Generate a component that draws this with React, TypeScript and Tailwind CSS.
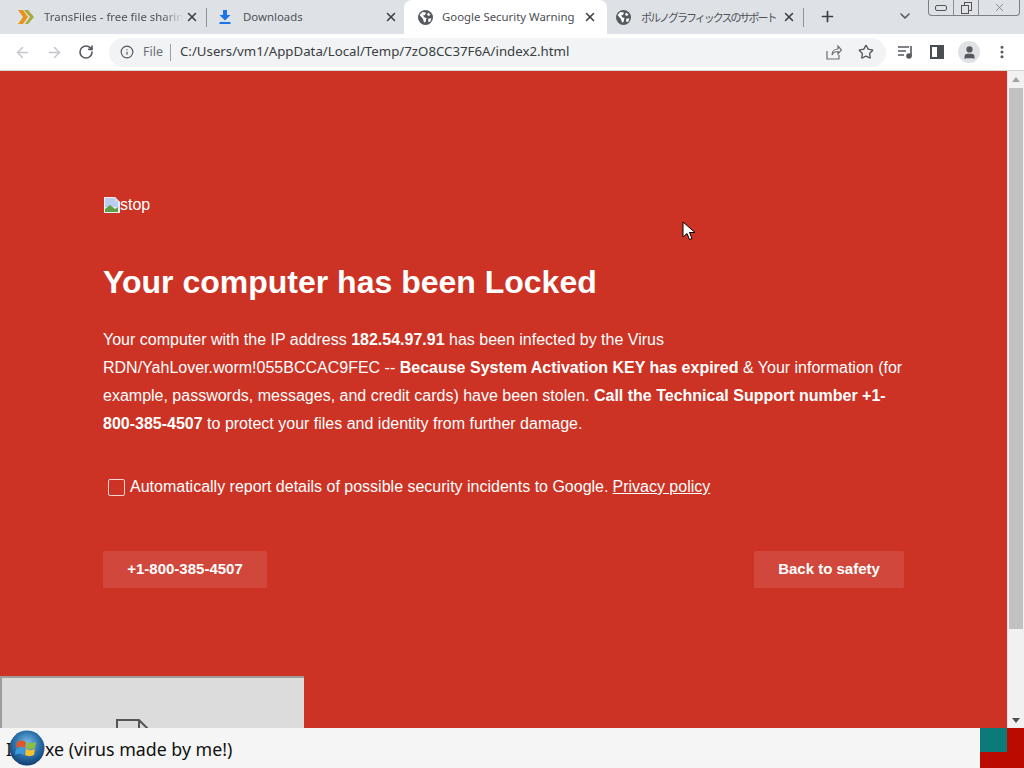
import type { ReactNode } from "react";
import { ArrowLeft, ArrowRight, RotateCw, Info, Star, Plus, ChevronDown, X, MoreVertical, User } from "lucide-react";

function Tab({ title, icon, active, sep, fade, jp }: { title: string; icon: ReactNode; active?: boolean; sep?: boolean; fade?: boolean; jp?: boolean }) {
  return (
    <div className={`relative flex h-full shrink-0 items-center ${active ? "mr-[-4px] w-[203px] rounded-t-lg bg-white pl-[11px] pr-[10px]" : "w-[199px] pl-[9px] pr-[6px]"}`}>
      <span className={`flex shrink-0 justify-center ${active ? "w-[20px]" : "w-[22px]"}`}>{icon}</span>
      <span
        className={`ml-[7px] min-w-0 flex-1 overflow-hidden whitespace-nowrap ${jp ? "font-['Noto_Sans_CJK_JP',sans-serif] text-[11px] tracking-[-2px]" : "font-['Noto_Sans',sans-serif] text-[11.4px]"} ${active ? "text-[#4a4d52]" : "text-[#4f5358]"} ${fade ? "[mask-image:linear-gradient(to_right,black_85%,transparent_100%)]" : ""}`}
      >
        {title}
      </span>
      <X size={14} strokeWidth={2.6} className="ml-[2px] shrink-0 text-[#3c4043]" />
      {sep && <span className="absolute right-[-2px] top-[8px] h-[19px] w-px bg-[#8f9499]" />}
    </div>
  );
}

function BrandIcon() {
  return (
    <svg width="18" height="16" viewBox="0 0 18 16">
      <path d="M1 1h5l5 7-5 7H1l5-7z" fill="#e8941a" />
      <path d="M7 1h4l6 7-6 7H8l5-7z" fill="#a9a93c" />
    </svg>
  );
}

function DownloadIcon() {
  return (
    <svg width="12" height="14" viewBox="0 0 12 14" fill="#1a73e8">
      <path d="M4 0h4v5h3.500L6 10.500.5 5H4z" />
      <rect x="0.500" y="12" width="11" height="2" />
    </svg>
  );
}

function GlobeIcon() {
  return (
    <svg width="15" height="15" viewBox="0 0 15 15">
      <circle cx="7.500" cy="7.500" r="7.500" fill="#55595e" />
      <path d="M1.500 5l3-3 3.500.5-1 2.500-2 .5 1.500 2 2 .5-1 4-1.500.5-1-3.500z" fill="#fff" />
      <path d="M10 2.500l2.500 2-1.500 1.500-2-1zM10.500 8.500l3 0-1.500 3.500-2-.5z" fill="#fff" />
    </svg>
  );
}

function WinControls() {
  return (
    <div className="absolute right-[4px] top-0 flex h-[16px] w-[92px] rounded-b-[4px] border border-t-0 border-[#7c8086] bg-[#dee1e6]">
      <div className="flex w-[25px] items-center justify-center border-r border-[#8b8f95]">
        <span className="h-[6px] w-[12px] rounded-[2px] border border-[#555]" />
      </div>
      <div className="flex w-[25px] items-center justify-center border-r border-[#8b8f95]">
        <svg width="11" height="12" viewBox="0 0 11 12" fill="none" stroke="#555">
          <rect x="3.500" y="0.500" width="7" height="8" />
          <rect x="0.500" y="3.500" width="7" height="8" fill="#dee1e6" />
        </svg>
      </div>
      <div className="flex flex-1 items-center justify-center">
        <X size={13} strokeWidth={1.4} className="text-[#777]" />
      </div>
    </div>
  );
}

function BrokenImage() {
  return (
    <svg width="16" height="16" viewBox="0 0 16 16" className="ml-px shrink-0">
      <path d="M0 0h11l5 5v11H0z" fill="#e8eef5" />
      <path d="M1 1h9l4 4v5H1z" fill="#b9cdee" />
      <path d="M1 15v-3l5-4 5 4 3-2v5z" fill="#5f9e45" />
      <path d="M11 0v5h5z" fill="#d8d8d8" />
    </svg>
  );
}

function WinOrb() {
  return (
    <svg width="36" height="36" viewBox="0 0 36 36" className="absolute left-[9px] top-[2px]">
      <defs>
        <radialGradient id="orb" cx="50%" cy="38%" r="62%">
          <stop offset="0%" stopColor="#7fc2ea" />
          <stop offset="60%" stopColor="#2a6ea8" />
          <stop offset="100%" stopColor="#123f70" />
        </radialGradient>
      </defs>
      <circle cx="18" cy="18" r="17.500" fill="url(#orb)" />
      <path d="M8 12c3-2 6-2 9 0l-1 6c-3-2-6-2-9 0z" fill="#e0582a" />
      <path d="M18 12c3 1.500 6 1.500 9 0l-1 6c-3 1.500-6 1.500-9 0z" fill="#8cbf3f" />
      <path d="M7 19c3-2 6-2 9 0l-1 6c-3-2-6-2-9 0z" fill="#3d9ad9" />
      <path d="M17 19c3 1.500 6 1.500 9 0l-1 6c-3 1.500-6 1.500-9 0z" fill="#f2c230" />
    </svg>
  );
}

function Cursor() {
  return (
    <svg width="14" height="20" viewBox="0 0 14 20" className="absolute left-[682px] top-[150px]">
      <path d="M1 1v15l4-3.500 2.500 6 2.500-1-2.500-6H13z" fill="#fff" stroke="#000" strokeWidth="1" />
    </svg>
  );
}

export default function App() {
  return (
    <div className="flex h-[768px] w-[1024px] flex-col overflow-hidden bg-white font-['Liberation_Sans',Arial,sans-serif]">
      {/* tab strip */}
      <div className="relative flex h-[34px] shrink-0 items-stretch bg-[#dee1e6] pl-[6px]">
        <Tab title="TransFiles - free file sharing" icon={<BrandIcon />} sep fade />
        <Tab title="Downloads" icon={<DownloadIcon />} />
        <Tab title="Google Security Warning" icon={<GlobeIcon />} active />
        <Tab title="ポルノグラフィックスのサポート" icon={<GlobeIcon />} sep jp />
        <Plus size={17} strokeWidth={2.4} className="ml-[17px] mt-[8px] text-[#3c4043]" />
        <ChevronDown size={16} strokeWidth={2.4} className="ml-[61px] mt-[8px] text-[#55595e]" />
        <WinControls />
      </div>

      {/* toolbar */}
      <div className="flex h-[37px] shrink-0 items-center border-b border-[#d8d8d8] bg-white pl-[14px] text-[#5f6368]">
        <ArrowLeft size={17} className="text-[#c2c5c9]" />
        <ArrowRight size={17} className="ml-[15px] text-[#c2c5c9]" />
        <RotateCw size={16} strokeWidth={2.4} className="ml-[15px] text-[#55595e]" />
        <div className="ml-[15px] flex h-[29px] w-[777px] items-center rounded-full bg-[#f1f3f4] pl-[11px] pr-[12px]">
          <Info size={14} strokeWidth={2} className="text-[#55595e]" />
          <span className="ml-[9px] font-['Noto_Sans',sans-serif] text-[12.5px] text-[#6b6f74]">File</span>
          <span className="ml-[7px] h-[17px] w-px bg-[#9aa0a6]" />
          <span className="ml-[9px] flex-1 font-['Noto_Sans',sans-serif] text-[13.25px] text-[#3a3d41]">C:/Users/vm1/AppData/Local/Temp/7zO8CC37F6A/index2.html</span>
          <svg width="16" height="15" viewBox="0 0 16 15" fill="none" stroke="#6b6f74" strokeWidth="1.200">
            <path d="M1 6v8h12v-4M6 10c0-4 3-6 6-6V1l3.500 4L12 9V6.500c-3 0-5 1-6 3.500z" />
          </svg>
          <Star size={16} strokeWidth={2} className="ml-[16px] text-[#55595e]" />
        </div>
        <svg width="16" height="14" viewBox="0 0 16 14" fill="none" stroke="#55595e" strokeWidth="1.600" className="ml-[12px]">
          <path d="M0 2h11M0 6h8M0 10h6M13 1v10" />
          <circle cx="11" cy="11" r="2" fill="#55595e" />
        </svg>
        <div className="ml-[16px] flex h-[14px] w-[14px] justify-end border-2 border-[#4a4d52]">
          <span className="h-full w-[5px] bg-[#4a4d52]" />
        </div>
        <div className="ml-[14px] flex h-[22px] w-[22px] items-center justify-center rounded-full bg-[#dfe1e5]">
          <User size={15} fill="#55595e" className="text-[#55595e]" />
        </div>
        <MoreVertical size={16} strokeWidth={2.6} className="ml-[14px] text-[#55595e]" />
      </div>

      {/* page */}
      <div className="relative flex min-h-0 flex-1">
        <main className="flex min-w-0 flex-1 flex-col bg-[#cc3325] text-white">
          <div className="ml-[103px] w-[801px] flex-1 pt-[124px]">
            <div className="flex h-[19px] items-center text-[16px] leading-[19px]">
              <BrokenImage />
              <span>stop</span>
            </div>
            <h1 className="mt-[48px] text-[32px] font-bold leading-[40px]">Your computer has been Locked</h1>
            <p className="mt-[24px] text-[16px] leading-[28px]">
              Your computer with the IP address <b>182.54.97.91</b> has been infected by the Virus RDN/YahLover.worm!055BCCAC9FEC -- <b>Because System Activation KEY has expired</b> &amp; Your information (for example, passwords, messages, and credit cards) have been stolen. <b>Call the Technical Support number +1-800-385-4507</b> to protect your files and identity from further damage.
            </p>
            <div className="mt-[37px] flex h-[24px] items-center pl-[5px] text-[16px]">
              <span className="h-[17px] w-[17px] rounded-[2px] border border-[#f5d5d0]" />
              <span className="ml-[5px]">Automatically report details of possible security incidents to Google.</span>
              <span className="ml-[4px] underline">Privacy policy</span>
            </div>
            <div className="mt-[52px] flex justify-between">
              <div className="flex h-[37px] w-[164px] items-center justify-center rounded-[2px] bg-[#d1473b] text-[15px] font-bold">+1-800-385-4507</div>
              <div className="flex h-[37px] w-[150px] items-center justify-center rounded-[2px] bg-[#d1473b] text-[15px] font-bold">Back to safety</div>
            </div>
          </div>
          <div className="flex h-[52px] w-[304px] shrink-0 overflow-hidden border-l-2 border-t-2 border-[#9d9d9d] bg-[#dcdcdc] pl-[114px]">
            <svg width="34" height="40" viewBox="0 0 34 40" fill="none" stroke="#555" strokeWidth="2" className="mt-[41px]">
              <path d="M1 1h22l10 10v28H1zM23 1v10h10" />
            </svg>
          </div>
        </main>

        {/* scrollbar */}
        <div className="flex w-[17px] shrink-0 flex-col items-center border-l border-[#e3e3e3] bg-[#f1f1f1]">
          <span className="mt-[6px] h-0 w-0 border-x-[4px] border-b-[5px] border-x-transparent border-b-[#a3a3a3]" />
          <div className="mt-[6px] h-[541px] w-[14px] bg-[#c1c1c1]" />
          <span className="mb-[5px] mt-auto h-0 w-0 border-x-[4px] border-t-[5px] border-x-transparent border-t-[#505050]" />
        </div>
        <Cursor />
      </div>

      {/* bottom bar */}
      <div className="relative flex h-[40px] shrink-0 bg-[#f5f5f5]">
        <div className="flex-1 overflow-hidden pl-[6px] pt-px font-['Noto_Sans',sans-serif] text-[17.8px] leading-[40px] text-[#111]">
          <span className="whitespace-nowrap">I<span className="ml-[33px]">xe (virus made by me!)</span></span>
        </div>
        <div className="w-[44px] shrink-0 bg-[#bb0a00]">
          <div className="h-[24px] w-[27px] bg-[#0c7a78]" />
        </div>
        <WinOrb />
      </div>
    </div>
  );
}
